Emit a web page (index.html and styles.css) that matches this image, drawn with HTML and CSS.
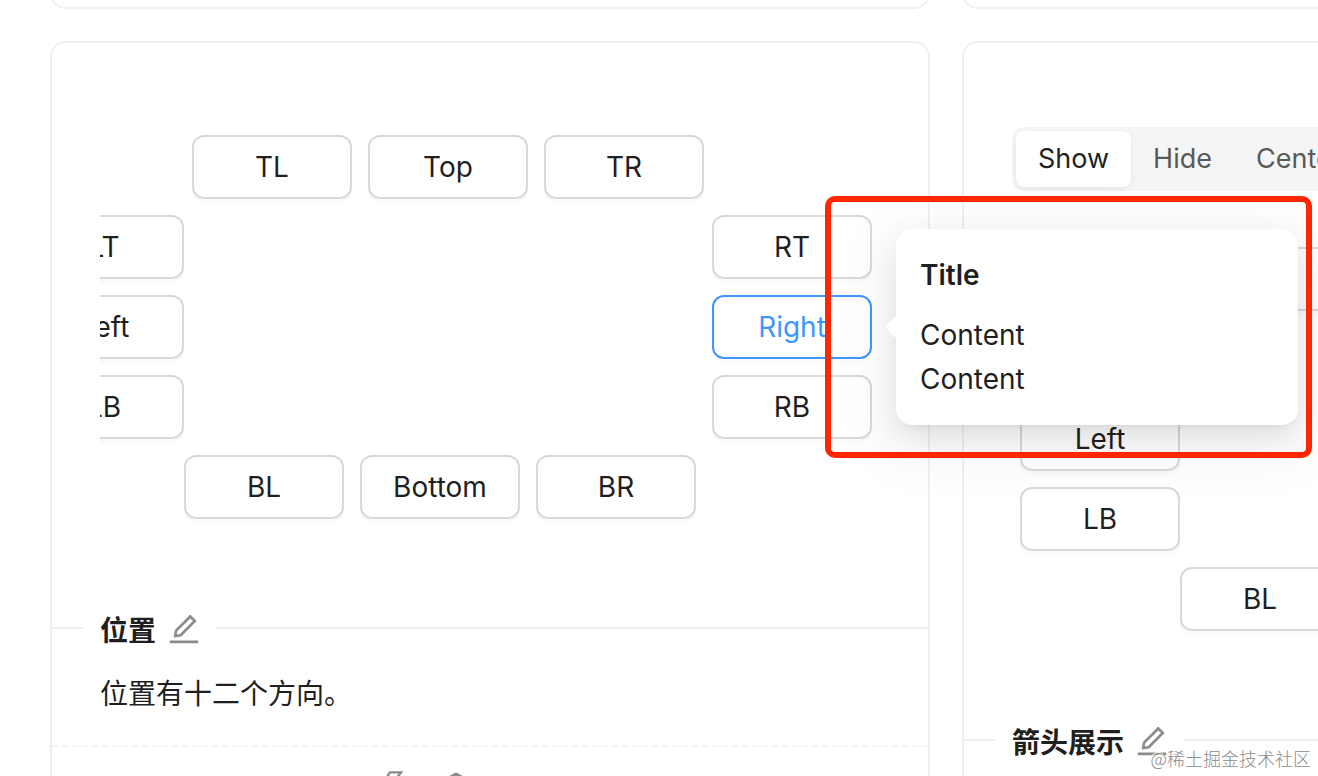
FILE: index.html
```html
<!DOCTYPE html>
<html lang="zh-CN">
<head>
<meta charset="utf-8">
<title>Popover 气泡卡片</title>
<link rel="stylesheet" href="styles.css">
</head>
<body>
<svg class="sprite" aria-hidden="true">
  <symbol id="edit" viewBox="64 64 896 896"><path d="M257.7 752c2 0 4-.2 6-.5L431.9 722c2-.4 3.9-1.3 5.3-2.8l423.9-423.9a9.96 9.96 0 000-14.1L694.9 114.9c-1.9-1.9-4.4-2.9-7.1-2.9s-5.2 1-7.1 2.9L256.8 538.8c-1.5 1.5-2.4 3.3-2.8 5.3l-29.5 168.2a33.5 33.5 0 009.4 29.8c6.6 6.4 14.9 9.9 23.8 9.9zm67.4-174.4L687.8 215l73.3 73.3-362.7 362.6-88.9 15.7 15.6-89zM880 836H144c-17.7 0-32 14.3-32 32v36c0 4.4 3.6 8 8 8h784c4.4 0 8-3.6 8-8v-36c0-17.7-14.3-32-32-32z"/></symbol>
  <symbol id="bolt" viewBox="64 64 896 896"><path d="M848 359.3H627.7L825.8 109c4.1-5.3.4-13-6.3-13H436c-2.8 0-5.5 1.5-6.9 4L170 547.5c-3.1 5.3.7 12 6.9 12h174.4l-89.4 357.6c-1.9 7.8 7.5 13.3 13.3 7.7L853.5 373c5.2-4.9 1.7-13.7-5.5-13.7zM378.2 732.5l60.3-241H281.1l189.6-327.4h224.6L487 427.4h211L378.2 732.5z"/></symbol>
  <symbol id="cube" viewBox="0 0 32 32"><path d="M16 4 27 10V23L16 29 5 23V10ZM5 10 16 16 27 10M16 16V29" fill="none" stroke="currentColor" stroke-width="3" stroke-linejoin="round"/></symbol>
  <symbol id="code" viewBox="0 0 32 32"><path d="M11 10 4 16l7 6M21 10l7 6-7 6" fill="none" stroke="currentColor" stroke-width="3"/></symbol>
</svg>
<main class="gallery">
  <section class="card card-previous"></section>
  <section class="card card-previous"></section>

  <section class="card">
    <div class="demo">
      <div class="board board-shifted">
        <div class="row row-top">
          <button class="btn">TL</button><button class="btn">Top</button><button class="btn">TR</button>
        </div>
        <div class="row row-middle">
          <div class="stack"><button class="btn">LT</button><button class="btn">Left</button><button class="btn">LB</button></div>
          <div class="stack"><button class="btn">RT</button><button class="btn btn-active">Right</button><button class="btn">RB</button></div>
        </div>
        <div class="row row-bottom">
          <button class="btn">BL</button><button class="btn">Bottom</button><button class="btn">BR</button>
        </div>
      </div>
    </div>
    <header class="caption">
      <h2 class="caption-title">位置</h2>
      <a class="edit" href="#edit-placement" aria-label="编辑"><svg class="icon"><use href="#edit"/></svg></a>
    </header>
    <p class="description">位置有十二个方向。</p>
    <footer class="actions">
      <button class="action" aria-label="StackBlitz"><svg class="icon"><use href="#bolt"/></svg></button>
      <button class="action" aria-label="CodeSandbox"><svg class="icon"><use href="#cube"/></svg></button>
      <button class="action" aria-label="复制"><svg class="icon"><use href="#code"/></svg></button>
      <button class="action" aria-label="代码"><svg class="icon"><use href="#code"/></svg></button>
    </footer>
  </section>

  <section class="card">
    <div class="demo">
      <div class="segmented">
        <button class="segment segment-selected">Show</button><button class="segment">Hide</button><button class="segment">Center</button>
      </div>
      <div class="board">
        <div class="row row-top">
          <button class="btn">TL</button><button class="btn">Top</button><button class="btn">TR</button>
        </div>
        <div class="row row-middle">
          <div class="stack"><button class="btn">LT</button><button class="btn">Left</button><button class="btn">LB</button></div>
          <div class="stack"><button class="btn">RT</button><button class="btn">Right</button><button class="btn">RB</button></div>
        </div>
        <div class="row row-bottom">
          <button class="btn">BL</button><button class="btn">Bottom</button><button class="btn">BR</button>
        </div>
      </div>
    </div>
    <header class="caption">
      <h2 class="caption-title">箭头展示</h2>
      <a class="edit" href="#edit-arrow" aria-label="编辑"><svg class="icon"><use href="#edit"/></svg></a>
    </header>
  </section>
</main>

<aside class="popover" role="tooltip">
  <svg class="popover-arrow" viewBox="0 0 12 32" aria-hidden="true"><path d="M12 2C12 4 11 5 10 6L2 14Q0 16 2 18L10 26C11 27 12 28 12 30Z" fill="#fff"/></svg>
  <h3 class="popover-title">Title</h3>
  <p class="popover-line">Content</p>
  <p class="popover-line">Content</p>
</aside>
<div class="highlight"></div>
<span class="watermark">@稀土掘金技术社区</span>
</body>
</html>
```

FILE: styles.css
```css
* {
  box-sizing: border-box;
}

body {
  position: relative;
  height: 100vh;
  margin: 0;
  overflow: hidden;
  background: #fff;
  color: #1f1f1f;
  font: 28px/44px Inter, "Noto Sans CJK SC", sans-serif;
}

h2, h3, p {
  margin: 0;
}

button {
  padding: 0;
  border: 0;
  background: none;
  color: inherit;
  font: inherit;
}

.sprite {
  position: absolute;
  width: 0;
  height: 0;
}

.gallery {
  display: grid;
  grid-template-columns: repeat(2, minmax(880px, 1fr));
  gap: 32px;
  margin-top: -23px;
  padding-left: 50px;
}

.card {
  border: 2px solid #f0f0f0;
  border-radius: 16px;
}

.card-previous {
  height: 32px;
}

.demo {
  padding: 84px 48px 76px;
}

.board {
  overflow: hidden;
}

.board-shifted > .row {
  position: relative;
  left: -84px;
}

.row {
  display: flex;
}

.row-top {
  padding-left: 168px;
}

.row-middle {
  gap: 512px;
}

.row-bottom {
  padding-left: 160px;
}

.stack {
  display: flex;
  flex-direction: column;
}

.btn {
  flex: none;
  width: 160px;
  height: 64px;
  margin: 8px;
  border: 2px solid #d9d9d9;
  border-radius: 12px;
  background: #fff;
  box-shadow: 0 4px 0 rgba(0, 0, 0, 0.02);
}

.btn-active {
  border-color: #4096ff;
  color: #4096ff;
}

.segmented {
  display: flex;
  width: fit-content;
  margin-bottom: 48px;
  padding: 4px;
  border-radius: 12px;
  background: #f5f5f5;
}

.segment {
  height: 56px;
  padding: 0 22px;
  border-radius: 8px;
  color: #595959;
  font-size: 27px;
}

.segment-selected {
  background: #fff;
  color: #1f1f1f;
  box-shadow: 0 2px 4px rgba(0, 0, 0, 0.03), 0 2px 12px -2px rgba(0, 0, 0, 0.04), 0 4px 8px rgba(0, 0, 0, 0.02);
}

.caption {
  display: flex;
  align-items: center;
}

.caption::before,
.caption::after {
  content: "";
  width: 32px;
  height: 2px;
  margin-right: 16px;
  background: #f0f0f0;
}

.caption::after {
  flex: 1;
  margin: 0 0 0 16px;
}

.caption-title {
  margin-right: 12px;
  padding-top: 6px;
  font-size: 28px;
  font-weight: 600;
}

.icon {
  display: block;
  width: 32px;
  height: 32px;
  fill: currentColor;
}

.edit,
.action {
  color: #8c8c8c;
}

.edit {
  padding-top: 2px;
}

.description {
  padding: 19px 48px 29px;
}

.actions {
  display: flex;
  justify-content: center;
  gap: 32px;
  padding: 23px 4px 23px 0;
  border-top: 2px dashed #f5f5f5;
}

.popover {
  position: absolute;
  top: 229px;
  left: 896px;
  width: 402px;
  padding: 24px;
  border-radius: 16px;
  background: #fff;
  box-shadow: 0 12px 32px rgba(0, 0, 0, 0.08), 0 6px 12px -8px rgba(0, 0, 0, 0.12), 0 18px 56px 16px rgba(0, 0, 0, 0.05);
}

.popover-arrow {
  position: absolute;
  top: 82px;
  left: -11px;
  width: 12px;
  height: 32px;
}

.popover-title {
  margin-bottom: 16px;
  font-size: 28px;
  font-weight: 600;
}

.highlight {
  position: absolute;
  top: 196px;
  left: 825px;
  width: 487px;
  height: 262px;
  border: 6px solid #ff2600;
  border-radius: 10px;
}

.watermark {
  position: absolute;
  right: 7px;
  bottom: 6px;
  color: #8c8c8c;
  font: 300 18px/24px "Noto Sans CJK SC", sans-serif;
  text-shadow: 1px 1px 0 #fff, -1px -1px 0 #fff;
}
```
